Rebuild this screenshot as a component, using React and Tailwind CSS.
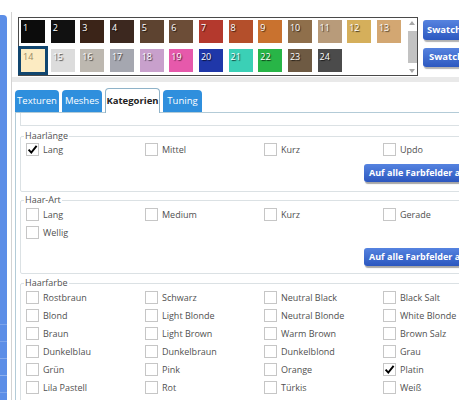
import React from 'react';

const swatches = [
  { n: 1, c: '#0c0c0c' },
  { n: 2, c: '#111111' },
  { n: 3, c: '#3b2418' },
  { n: 4, c: '#3c281f' },
  { n: 5, c: '#5d4330' },
  { n: 6, c: '#6c4d37' },
  { n: 7, c: '#b4392d' },
  { n: 8, c: '#b44f2b' },
  { n: 9, c: '#c9722f' },
  { n: 10, c: '#8f6f4b' },
  { n: 11, c: '#b89b7a' },
  { n: 12, c: '#d5af5b' },
  { n: 13, c: '#d3a772' },
  { n: 14, c: '#fcebc2', selected: true },
  { n: 15, c: '#dcdcdc' },
  { n: 16, c: '#bdb8b0' },
  { n: 17, c: '#a5a7b0' },
  { n: 18, c: '#c8a0cc' },
  { n: 19, c: '#e659ab' },
  { n: 20, c: '#1f37a9' },
  { n: 21, c: '#3bd0b6' },
  { n: 22, c: '#28b547' },
  { n: 23, c: '#6e5a43' },
  { n: 24, c: '#4b4b4b' },
];

const haarfarbe = [
  ['Rostbraun', 'Schwarz', 'Neutral Black', 'Black Salt'],
  ['Blond', 'Light Blonde', 'Neutral Blonde', 'White Blonde'],
  ['Braun', 'Light Brown', 'Warm Brown', 'Brown Salz'],
  ['Dunkelblau', 'Dunkelbraun', 'Dunkelblond', 'Grau'],
  ['Grün', 'Pink', 'Orange', 'Platin'],
  ['Lila Pastell', 'Rot', 'Türkis', 'Weiß'],
];

const Check = ({ label, checked }) => (
  <div className="flex items-center h-[13px]">
    <div className="w-[13px] h-[13px] border border-[#c6c6c6] bg-white flex items-center justify-center shrink-0">
      {checked && (
        <svg width="11" height="11" viewBox="0 0 11 11">
          <path d="M1.6 5.6 L4.3 8.6 L9.6 1.8" fill="none" stroke="#000" strokeWidth="1.9" />
        </svg>
      )}
    </div>
    <span className="ml-[4px] text-[#505050] whitespace-nowrap leading-none">{label}</span>
  </div>
);

const ApplyButton = ({ className }) => (
  <button
    className={`ml-[338px] w-[120px] h-[18px] rounded-l-[3px] bg-gradient-to-b from-[#5583e0] to-[#2c57bf] text-white font-bold text-[9px] text-left pl-[5px] whitespace-nowrap shadow-[1px_2px_1px_rgba(0,0,0,0.35)] ${className}`}
  >
    Auf alle Farbfelder anwenden
  </button>
);

const Group = ({ title, className, children }) => (
  <fieldset className={`border border-[#dbe1e4] rounded-[2px] px-[5px] ${className}`}>
    <legend className="px-[1px] -ml-[2px] leading-[14px] text-[#505050]">{title}</legend>
    {children}
  </fieldset>
);

export default function App() {
  return (
    <div
      className="flex w-[459px] h-[400px] overflow-hidden bg-white text-[9px]"
      style={{ fontFamily: '"Open Sans", "Noto Sans", sans-serif' }}
    >
      {/* left side strip */}
      <div className="w-[7px] mt-[15px] shrink-0 bg-[#5c8ee7] rounded-tr-[4px] flex flex-col">
        <div className="mt-auto mb-[7px] flex flex-col gap-[16px]">
          <div className="h-px bg-white/20" />
          <div className="h-px bg-white/20" />
          <div className="h-px bg-white/25" />
          <div className="h-px bg-white/30" />
          <div className="h-px bg-white/20" />
        </div>
      </div>
      <div className="w-[4px] shrink-0" />

      <div className="mt-[12px] w-[560px] shrink-0 border-l border-[#d3d3d3] flex flex-col overflow-hidden">
        {/* swatch picker */}
        <div className="flex shrink-0 pl-[6px] pt-[5px]">
          <div className="w-[400px] h-[59px] border border-[#4a4a4a] flex">
            <div className="pl-[2px] pt-[2px] grid grid-cols-[repeat(13,24px)] gap-x-[5.67px] gap-y-[6px] content-start">
              {swatches.map((s) => (
                <div
                  key={s.n}
                  className={
                    s.selected
                      ? 'h-[23px] text-[9px] leading-none pl-[2px] pt-[3px] text-[#9a8a66] outline-[3px] outline-solid outline-[#11466f]'
                      : 'h-[23px] text-[9px] leading-none pl-[2px] pt-[3px] text-white [text-shadow:1px_1px_1px_rgba(0,0,0,0.75)]'
                  }
                  style={{ background: s.c }}
                >
                  {s.n}
                </div>
              ))}
            </div>
            <div className="ml-auto w-[10px] flex flex-col items-center pt-[2px] pb-[1px]">
              <svg width="8" height="6" viewBox="0 0 8 6">
                <path d="M4 1 L7 5 L1 5 Z" fill="#a9a9a9" />
              </svg>
              <div className="mt-[5px] w-[9px] h-[32px] bg-[#c2c2c2]" />
              <svg className="mt-auto" width="8" height="6" viewBox="0 0 8 6">
                <path d="M1 1 L7 1 L4 5 Z" fill="#a9a9a9" />
              </svg>
            </div>
          </div>
          <div className="ml-[5px] flex flex-col">
            <button className="mt-[3px] w-[80px] h-[20px] rounded-[3px] bg-gradient-to-b from-[#5683df] to-[#2d58c0] text-white font-bold text-[9.5px] text-left pl-[4px] whitespace-nowrap overflow-hidden shadow-[1px_2px_1px_rgba(0,0,0,0.3)]">
              Swatch laden
            </button>
            <button className="mt-[8px] w-[80px] h-[19px] rounded-[3px] bg-gradient-to-b from-[#5683df] to-[#2d58c0] text-white font-bold text-[9.5px] text-left pl-[6px] whitespace-nowrap overflow-hidden shadow-[1px_2px_1px_rgba(0,0,0,0.3)]">
              Swatch speichern
            </button>
          </div>
        </div>

        <div className="mt-[1px] h-[5px] shrink-0 bg-[#e9e9e9]" />

        {/* tabs */}
        <div className="mt-[6px] pl-[3px] flex shrink-0 items-end gap-[3px] h-[24px]">
          <div className="w-[44px] h-[22px] rounded-t-[4px] bg-[#2f8fdd] text-white text-[9.5px] flex items-center justify-center">Texturen</div>
          <div className="w-[40px] h-[22px] rounded-t-[4px] bg-[#2f8fdd] text-white text-[9.5px] flex items-center justify-center">Meshes</div>
          <div className="w-[55px] h-[25px] -mb-px rounded-t-[4px] bg-white border border-b-0 border-[#8fb3c9] text-[#222] font-bold text-[9.5px] flex items-center justify-center relative z-10">Kategorien</div>
          <div className="w-[39px] h-[22px] rounded-t-[4px] bg-[#2f8fdd] text-white text-[9.5px] flex items-center justify-center">Tuning</div>
        </div>

        {/* tab content */}
        <div className="ml-[3px] shrink-0 border-l border-t border-[#b3cbd7] pl-[4px]">
          <div className="h-[13px] border-x border-b border-[#dbe1e4] flex flex-col">
            <div className="mt-[4px] ml-auto w-[95px] h-[2px] rounded-bl-[2px] bg-[#4e4e4e]" />
          </div>

          <Group title="Haarlänge" className="mt-[3px] pb-[9px]">
            <div className="grid grid-cols-[repeat(4,119px)]">
              <Check label="Lang" checked />
              <Check label="Mittel" />
              <Check label="Kurz" />
              <Check label="Updo" />
            </div>
            <ApplyButton className="mt-[8px]" />
          </Group>

          <Group title="Haar-Art" className="mt-[1px] pb-[7px]">
            <div className="pt-[1px] grid grid-cols-[repeat(4,119px)] gap-y-[5px]">
              <Check label="Lang" />
              <Check label="Medium" />
              <Check label="Kurz" />
              <Check label="Gerade" />
              <Check label="Wellig" />
            </div>
            <ApplyButton className="mt-[9px]" />
          </Group>

          <Group title="Haarfarbe" className="mt-[2px] pb-[10px]">
            <div className="pt-[1px] grid grid-cols-[repeat(4,119px)] gap-y-[5px]">
              {haarfarbe.flat().map((name) => (
                <Check key={name} label={name} checked={name === 'Platin'} />
              ))}
            </div>
          </Group>
        </div>
      </div>
    </div>
  );
}
